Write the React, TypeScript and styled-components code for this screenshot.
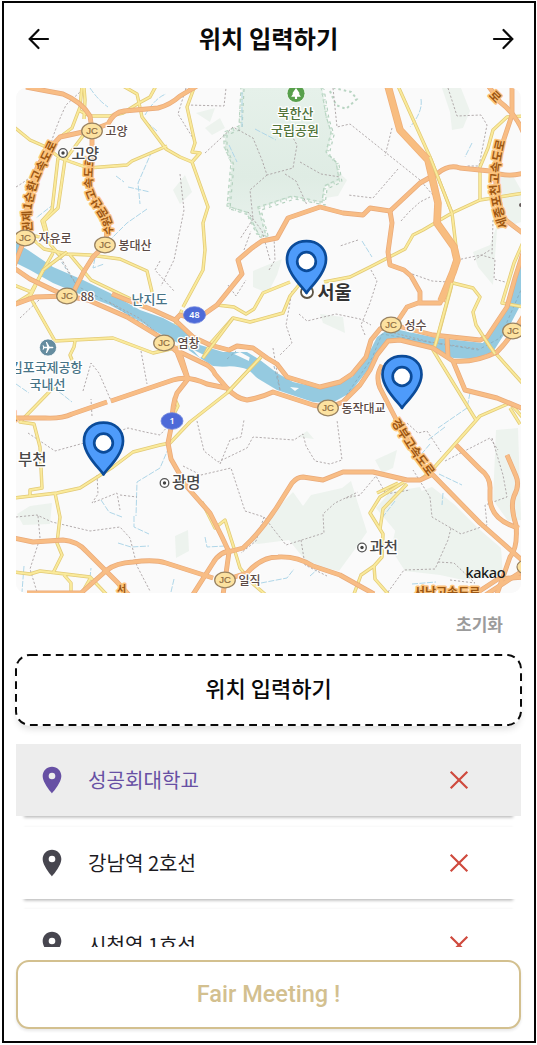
import React from 'react';
import styled, { createGlobalStyle } from 'styled-components';
import { MdLocationOn, MdPark, MdAirplanemodeActive } from 'react-icons/md';

const GlobalStyle = createGlobalStyle`
  *, *::before, *::after { box-sizing: border-box; }
  body { margin: 0; background: #fff; font-family: Roboto, "Noto Sans CJK KR", sans-serif; }
  button { font: inherit; padding: 0; border: 0; background: none; color: inherit; }
`;

const Page = styled.div`
  width: 537px;
  height: 1045px;
  padding: 1px 1px 2px 2px;
  background: #fff;
`;

const Screen = styled.main`
  display: flex;
  flex-direction: column;
  width: 100%;
  height: 100%;
  padding: 0 13px 13px 12px;
  border: 2px solid #050505;
  overflow: hidden;
`;

const Header = styled.header`
  display: flex;
  align-items: center;
  justify-content: space-between;
  flex: none;
  height: 72px;
  margin-bottom: 13px;
  padding: 0 7px 0 12px;
`;

const Title = styled.h1`
  margin: 0 5px 2px 0;
  font: 700 24.3px/36px "Noto Sans CJK KR", sans-serif;
  color: #0a0a0a;
`;

const IconButton = styled.button<{ $size: number }>`
  display: flex;
  align-items: center;
  justify-content: center;
  flex: none;
  width: ${(p) => p.$size}px;
  height: ${(p) => p.$size}px;
`;

const MapCard = styled.section`
  flex: none;
  width: 505px;
  height: 505px;
  border-radius: 10px;
  overflow: hidden;
  background: #fafafa;
  svg { display: block; }
`;

const ResetRow = styled.div`
  display: flex;
  justify-content: flex-end;
  align-items: center;
  flex: none;
  height: 61px;
  padding-right: 18px;
`;

const ResetButton = styled.button`
  font: 700 17px/24px "Noto Sans CJK KR", sans-serif;
  color: #9b9b9b;
`;

const AddButton = styled.button`
  position: relative;
  display: flex;
  align-items: center;
  justify-content: center;
  flex: none;
  width: 507px;
  height: 72px;
  margin-left: -1px;
  padding-bottom: 6px;
  border-radius: 15px;
  background: #fff;
  box-shadow: 0 5px 7px -2px rgba(0, 0, 0, 0.13);
  font: 500 22px/32px "Noto Sans CJK KR", sans-serif;
  color: #0a0a0a;
`;

const DashedOutline = styled.svg`
  position: absolute;
  inset: 0;
`;

const PlaceList = styled.ul`
  display: flex;
  flex-direction: column;
  gap: 10.5px;
  flex: none;
  height: 203px;
  margin: 18px 0 0;
  padding: 0;
  list-style: none;
  overflow: hidden;
`;

const PlaceRow = styled.li<{ $active?: boolean }>`
  display: flex;
  align-items: center;
  flex: none;
  height: 72px;
  padding: 0 52px 0 20px;
  background: ${(p) => (p.$active ? '#ededed' : '#fff')};
  color: ${(p) => (p.$active ? '#6750a4' : '#1c1b1f')};
  box-shadow: 0 9.5px 3px -8px rgba(0, 0, 0, 0.28), 0 -9px 2px -8px rgba(0, 0, 0, 0.03);
  > svg { flex: none; color: ${(p) => (p.$active ? '#6750a4' : '#47464f')}; }
`;

const PlaceName = styled.span`
  flex: 1;
  margin-left: 20px;
  font: 400 20.1px/30px "Noto Sans CJK KR", sans-serif;
`;

const MeetingButton = styled.button`
  flex: none;
  height: 69px;
  margin-top: 13px;
  padding-bottom: 2px;
  border: 2.5px solid #d3c08f;
  border-radius: 13px;
  background: #fff;
  box-shadow: 0 2px 3px rgba(0, 0, 0, 0.09);
  font: 500 23.5px/28px Roboto, sans-serif;
  color: #d3c08f;
`;

const MapText = styled.text<{ $size?: number; $color?: string; $weight?: number }>`
  font-family: "Noto Sans CJK KR", sans-serif;
  font-size: ${(p) => p.$size ?? 12}px;
  font-weight: ${(p) => p.$weight ?? 500};
  fill: ${(p) => p.$color ?? '#5b4a45'};
  stroke: #fff;
  stroke-width: 2.5px;
  stroke-linejoin: round;
  paint-order: stroke;
`;

const RoadText = styled.text<{ $size?: number }>`
  font-family: "Noto Sans CJK KR", sans-serif;
  font-size: ${(p) => p.$size ?? 12}px;
  font-weight: 700;
  fill: #9c5713;
  stroke: #fdc47c;
  stroke-width: 3px;
  stroke-linejoin: round;
  paint-order: stroke;
`;

const highways = [
  'M26 87 L63 94 Q82 102 90 116 L92 130 L92 160 Q86 180 91 192 L106 218 Q108 232 105 245 L93 257 L83 273 L73 293',
  'M92 130 L60 137 L48 150 L38 165 Q29 190 26 215 L25 238 L14 266',
  'M92 130 L108 124 Q114 112 124 111 L158 108 Q170 105 180 96 L197 86',
  'M14 268 L30 279 L53 290 L67 296',
  'M10 306 L35 297 L67 296 L88 300 L127 317 L160 337 L180 352 L207 365 Q213 369 215 374 L227 388 Q237 399 247 400 Q260 398 273 392 L313 405 L328 408 L343 402 L360 385 L370 370 L377 355 L388 341 L400 340 L433 348 L453 361 Q475 363 497 352 Q510 339 524 315',
  'M112 294 L127 300 L153 310 L175 320 L193 337 L210 345 L229 350 L237 346 L253 348 L267 358 L277 364 L287 377 L320 387 L340 382 L352 374 L366 357 L371 340 L380 329 L390 324 L433 335 L480 340 L487 337 L507 307 L515 278 L524 250',
  'M175 320 L180 315 L187 317 L200 317 L217 305 L242 274 L238 260 L252 248 L262 241 L277 238 L288 218 L320 207 L343 213 L363 215 L370 208 L390 211 L420 183 L438 173 Q449 164 460 168 L490 171 Q507 178 524 173',
  'M388 86 L400 130 L428 160 L438 203 L437 223 L454 247 L457 260 L453 272 L440 303 L418 303 L407 307 L397 322',
  'M390 211 L392 223 L388 252 L390 265 L404 270 L411 276 L420 292 L420 303',
  'M447 337 L448 357',
  'M453 361 L465 390 L497 398 L524 409',
  'M382 365 Q375 376 380 388 L400 427 L420 463 L433 475 L480 523 L524 562',
  'M512 86 L512 115 L502 145 Q494 165 496 185 L503 218 L524 234',
  'M487 84 L500 102 Q516 114 524 134',
  'M14 418 L45 418 Q61 419 72 414 L107 402',
  'M111 401 L173 380 Q188 375 207 384 L226 388',
  'M180 353 L188 379 L177 393 Q172 405 172 423 L168 443 L171 459 L187 487 L210 513 L222 537 L229 552 L223 595',
  'M160 337 L177 352 L188 380',
  'M14 538 L33 542 L63 540 Q77 541 86 551 L117 582 L129 595',
  'M27 593 L81 593 L107 570 Q116 563 133 562 Q154 559 166 563 L213 578',
  'M192 596 L213 563 Q220 551 232 551 L243 548 Q260 533 277 507 L292 483 Q297 477 303 477 L323 480 L343 472 L373 472 L407 480 L420 480 L433 474',
  'M225 580 L247 573 Q261 557 278 557 Q297 556 313 566 L340 575 L374 594',
  'M456 445 L480 469 Q491 477 490 490 L490 500 Q492 521 519 528',
  'M507 455 L516 476 Q520 485 514 496 Q510 506 516 525 Q518 548 510 557 L497 594',
  'M524 570 L484 596',
  'M524 577 L498 579 L478 592',
];

const wideHighway = 'M388 86 L400 130 L428 160 L438 203 L437 223 L454 247 L457 260 L453 272 L441 301';

const yellowRoads = [
  'M14 127 L30 140 L46 147 L60 158 L88 168 L127 165 L132 161 L167 146',
  'M82 86 L80 107 L72 128 L60 137 M78 110 L90 116 L110 116 L123 113 L139 103 L150 97 L156 86',
  'M123 86 L137 94 L139 103 L142 117 L166 149 L180 157 L192 162 L200 153 L192 152 L195 143 L187 107 L194 88',
  'M84 88 L85 100 L84 119',
  'M192 162 L208 207 L203 223 L205 250 L203 270 L183 307',
  'M85 133 L65 160 L58 208 L44 221 L50 244 L62 258',
  'M58 158 L52 210 L42 221 L47 238 L28 235 L44 249 L67 254 L90 255 L120 259 L147 271 L152 292',
  'M67 252 L43 270 L30 297 L55 341 L113 338 L153 353 L175 348 L190 345',
  'M14 285 L31 292 L53 253 M16 303 L32 293',
  'M70 255 L91 280 L133 300',
  'M75 341 L74 347 L70 355 L72 360',
  'M56 385 L20 422 L34 424 L40 447 L42 488 L30 490 L30 497',
  'M14 498 L57 493 L80 488 L113 467 L133 452 L160 445 L170 443 L190 422 L227 393 L261 357',
  'M55 493 L60 517 L57 543 L62 555 L53 573',
  'M14 572 L30 574 L40 571 L90 577 L108 596 M64 575 L71 583 L71 594 M91 577 L83 591',
  'M203 358 L210 344 L233 318 L250 322 L283 313 L290 296 L299 285',
  'M217 305 L234 307 L246 314 L254 309 L263 293 L290 282 M324 282 L350 277 L370 267 L405 249 L413 235 L423 230 L452 213 L480 200 L524 193',
  'M398 86 L430 157 L452 213 L457 255 L451 288 L437 340 L433 350 L476 420',
  'M524 116 L507 117 L493 130 L488 148 L480 167 L480 200',
  'M453 283 L473 288 L480 297 L473 312 L476 325 L490 347 L524 385',
  'M524 240 L514 263 L502 303 L524 307',
  'M420 480 L432 470 L480 416 L510 403 L524 419',
  'M377 493 L398 483 M404 482 L380 497 L370 513 L383 534 L382 557 L374 566 L361 575 L354 594 M407 484 L383 509 L380 529 M374 566 L375 579 L389 595',
  'M202 502 L215 528 L225 520 L233 545 L240 568 L252 583 L266 595',
  'M174 397 L178 406 L174 414 M182 310 L175 324',
  'M510 408 L520 424',
];

const bridges = 'M203 358 L233 318 M227 393 L261 357 M435 346 L452 283 M483 336 L495 354 M67 252 L43 270 M430 157 L452 213';

const trails = [
  'M16 187 Q38 174 48 157 Q51 137 66 105 L80 92', 'M187 105 L224 106 L226 88',
  'M205 153 L233 127 L253 138 L262 160 L267 175 L293 168 L297 145 L292 136',
  'M267 175 L250 190 L253 219 L240 239 M285 174 L296 181 L307 205', 'M300 162 L321 174 L340 177',
  'M333 88 L337 127 L350 124 L420 180 L438 201', 'M398 169 L373 198 L348 195',
  'M448 88 L457 116 L481 115 L487 125 L479 166 L467 166', 'M392 128 L385 156',
  'M401 221 L409 212 L420 202 L430 197', 'M186 88 L178 114 L196 143 M180 174 L184 210 L174 260 L161 286',
  'M160 261 L155 270 L174 291', 'M57 251 L77 286 M109 302 L139 318 L157 333',
  'M20 318 L39 300 M83 391 L91 363 L99 373 L112 403', 'M92 416 L91 399 M141 351 L147 384',
  'M28 433 L55 451 L95 440 L128 428 L145 432 L160 435 L170 424',
  'M97 475 L98 494 L92 503 L117 493 L120 510 M120 495 L137 497',
  'M16 517 L37 515 L52 522 L90 531 L120 527 L130 538 L137 566 L150 591',
  'M38 516 L40 538 L30 569 L37 592', 'M197 421 L204 451 L218 462 L247 448 L253 437 L294 440 L303 434 L306 446 L315 461 L330 464 L342 460 L337 420',
  'M220 464 L230 440 L241 437 L244 420', 'M183 466 L201 475 L231 468 L245 511 L264 517 L286 545 L324 533 L323 514 L335 503 L358 492',
  'M301 540 L305 565 L327 576 M264 517 L256 541 L241 553',
  'M228 285 L236 296 L246 280 M269 270 L275 260 L274 237',
  'M292 291 L286 325 L292 343 L280 355', 'M299 314 L307 321 L336 314 L360 319 L371 325',
  'M371 270 L377 281 L370 303 L361 325 L365 335', 'M401 270 L432 281 L448 282',
  'M457 260 L481 255 L495 259 L494 279 L505 282', 'M407 423 L418 433 L427 431 L441 452 M445 461 L490 438 L498 450',
  'M492 438 L503 475 L507 497 L485 505 L487 525 L461 534 L432 517 L430 497 L413 470',
  'M388 592 L404 570 L435 569 L448 540 L451 528', 'M346 498 L360 495 L376 476 L386 494 L410 490',
  'M244 250 L251 231 M358 240 L340 246 M493 220 L492 255 M474 260 L490 250',
  'M273 348 L280 390 M382 330 L430 342 L478 349', 'M270 260 L262 231 L248 212',
  'M450 580 L475 583 L454 563 L438 562',
];

const streams = [
  'M90 88 Q98 100 108 107', 'M145 115 Q155 98 166 94 M157 131 L143 119',
  'M152 151 L138 183 L140 204 M116 176 L124 182 M128 187 L150 192',
  'M147 209 L127 223 L107 243 M54 204 L36 218', 'M95 258 L93 268 L104 264',
  'M242 92 L242 127 M229 145 L237 162 M255 129 L276 140', 'M421 99 Q423 112 410 127',
  'M472 143 L465 157 M362 241 L372 257', 'M169 447 L160 468 L137 482 L136 516',
  'M101 500 L109 512 L122 517 M134 516 L134 527 L149 534 M118 543 L131 547 L149 546',
  'M205 537 L207 547 L225 546 M261 583 L287 578 L294 569 M310 576 L319 568',
  'M470 393 L467 408 L438 428 M445 427 L428 440 M430 444 L419 457',
  'M395 501 L382 518 M439 474 L462 485 M443 493 L442 505', 'M16 384 L29 393 M53 387 L72 402',
  'M24 566 L22 592 M90 578 L91 568 M174 579 L171 592 M412 584 L436 582',
];

const jcLabels = [
  { x: 92, y: 131, name: '고양' }, { x: 25, y: 238, name: '자유로' }, { x: 105, y: 245, name: '봉대산' },
  { x: 67, y: 296, name: '88' }, { x: 164, y: 343, name: '염창' }, { x: 391, y: 325, name: '성수' },
  { x: 328, y: 408, name: '동작대교' }, { x: 225, y: 580, name: '일직' }, { x: 513, y: 331, name: '' },
];

const mapPins = [{ x: 306.5, y: 240 }, { x: 402, y: 355 }, { x: 103.5, y: 421.5 }];
const cityDots = [{ x: 63, y: 153 }, { x: 164.5, y: 483 }, { x: 362, y: 547.5 }];

function MapPin({ x, y }: { x: number; y: number }) {
  return (
    <g transform={`translate(${x} ${y})`}>
      <path d="M0 53 C-4 47 -19.5 33 -19.5 19.5 C-19.5 8 -11 1.2 0 1.2 C11 1.2 19.5 8 19.5 19.5 C19.5 33 4 47 0 53Z" fill="#4e9bfa" stroke="#0b4b99" strokeWidth="2.7" strokeLinejoin="round" />
      <circle cy="21.5" r="9.3" fill="#fff" stroke="#0b4b99" strokeWidth="2.7" />
    </g>
  );
}

function JunctionBadge({ x, y, name }: { x: number; y: number; name: string }) {
  return (
    <g>
      <ellipse cx={x} cy={y} rx="10.3" ry="7.8" fill="#fce2a0" stroke="#9a8361" strokeWidth="1.3" />
      <text x={x} y={y + 3.3} textAnchor="middle" fontFamily="Liberation Sans, sans-serif" fontSize="9.5" fill="#8d6c42" stroke="#8d6c42" strokeWidth=".2">JC</text>
      {name && <MapText x={x + 13.5} y={y + 4.5}>{name}</MapText>}
    </g>
  );
}

function RouteBadge({ x, y, n }: { x: number; y: number; n: string }) {
  return (
    <g>
      <ellipse cx={x} cy={y} rx="11" ry="8.3" fill="#4d6ad8" stroke="#6c83dd" strokeWidth=".8" />
      <text x={x} y={y + 3.3} textAnchor="middle" fontFamily="Noto Sans, sans-serif" fontWeight="600" fontSize="9" fill="#fff">{n}</text>
    </g>
  );
}

function CityMap() {
  const park = 'M242 87 L240 127 L225 133 L225 147 L232 163 L228 207 L247 213 L258 235 L267 237 L259 208 L293 197 L323 203 L325 187 L340 180 L337 163 L327 153 L332 133 L327 117 L322 87';
  return (
    <svg width="505" height="505" viewBox="16 88 505 505">
      <defs>
        <linearGradient id="parkShade" x1="0" y1="0" x2="0" y2="1">
          <stop offset="0" stopColor="#e6f1ea" /><stop offset=".6" stopColor="#dfece4" /><stop offset="1" stopColor="#e9f2ed" />
        </linearGradient>
        <path id="ringRoad" d="M32 232 L31 212 Q35 185 44 170 L62 134" />
        <path id="munsanRoad" d="M112 235 Q114 225 108 214 L96 195 Q90 184 95 152" />
        <path id="sejongRoad" d="M508 227 Q498 198 499 180 Q500 160 507 134" />
        <path id="gyeongbuRoad" d="M391 422 L411 453 L428 476" />
      </defs>
      <rect x="16" y="88" width="505" height="505" fill="#fafafa" />
      <g fill="#edf3ee">
        <path d="M442 88 L461 88 L470 111 L463 128 L452 130 L450 112Z" />
        <path d="M496 170 L512 174 L521 190 L521 222 L497 230 L493 285 L478 267 L473 252 L490 245 L498 222Z" />
        <path d="M333 167 L347 180 L338 196 L325 198Z M253 271 L282 259 L277 275 L268 293 L253 287Z M320 314 L343 317 L345 333 L323 323Z" />
        <path d="M185 175 L173 190 L180 204 L192 192Z M205 128 L220 118 L225 128 L212 135Z M196 113 L215 108 L210 122Z" />
        <path d="M351 481 L342 488 L311 495 L303 506 L293 492 L270 515 L246 542 L258 544 L289 540 L309 565 L339 571 L358 545 L367 532 L360 510Z" />
        <path d="M411 495 L432 487 L455 505 L480 530 L501 548 L503 575 L463 580 L440 575 L405 571 L391 549 L400 510Z" />
        <path d="M496 430 L518 428 L521 520 L508 521 L493 500Z M375 460 L397 450 L393 468 L382 473Z" />
        <path d="M30 506 L52 503 L50 524 L23 525 L17 514Z M175 536 L188 530 L189 551 L176 558Z M298 437 L307 431 L314 439Z" />
        <path d="M350 497 L360 510 L358 540 L350 542Z M376 508 L390 492 L420 487 L430 510 L417 532 L397 533Z" />
      </g>
      <path d={park} fill="url(#parkShade)" />
      <path d={park} fill="none" stroke="#b9d5c3" strokeWidth="1.2" strokeDasharray="3.5 3" transform="translate(-1 -1)" />
      <path d={park} fill="none" stroke="#b3d0be" strokeWidth="1.2" strokeDasharray="3 4" transform="translate(2 2)" />
      <path d={park} fill="none" stroke="#c3dccb" strokeWidth="3" strokeDasharray="1.3 4.5" />
      <path d="M330 91 L336 105 L346 109 L357 99 L351 92 L334 88" fill="none" stroke="#b9d5c3" strokeWidth="2" strokeDasharray="2.5 3" />
      <path d="M16 243 L28 250 L53 267 L83 280 L110 293 L140 310 L163 318 L180 327 L200 345 L223 352 L247 352 L260 360 L277 373 L293 382 L320 388 L343 380 L352 377 L367 357 L377 337 L390 328 L437 338 L483 343 L507 307 L522 258 L522 302 L510 325 L493 352 L473 359 L453 358 L437 350 L400 340 L387 342 L370 367 L350 393 L332 403 L313 402 L277 390 L257 378 L240 368 L213 366 L200 358 L180 344 L153 330 L143 323 L110 305 L77 293 L53 283 L30 270 L16 263Z" fill="#95cae0" />
      <path d="M234 354 L240 352 L251 358 L249 361Z M290 387 L299 388 L295 391Z M192 349 L204 355 L200 358Z M215 369 Q230 363 249 370 L268 389 Q246 394 215 369Z" fill="#fafafa" />
      <path d="M247 369 L276 388 L280 377 L262 362 L250 356Z" fill="#95cae0" />
      <path d="M56 253 L77 286 L110 303 L157 333 M227 359 L236 351 M274 366 L280 390 M343 400 L372 358 L382 334 L440 344 L478 350 L500 338 L521 290" fill="none" stroke="#86a9ba" strokeWidth=".8" strokeDasharray="3 2.4" />
      <g fill="none" stroke="#afd6e8" strokeWidth="1" strokeDasharray="6 1.5">{streams.map((d) => <path key={d} d={d} />)}</g>
      <g fill="none" stroke="#aaa3a4" strokeWidth=".9" strokeDasharray="2.2 1.8">{trails.map((d) => <path key={d} d={d} />)}</g>
      <g fill="none" strokeLinejoin="round">
        {yellowRoads.map((d) => <path key={d} d={d} stroke="#e2ca77" strokeWidth="3.4" />)}
        {yellowRoads.map((d) => <path key={d} d={d} stroke="#faea9b" strokeWidth="1.9" />)}
        {highways.map((d) => <path key={d} d={d} stroke="#e9aa7a" strokeWidth="4.9" />)}
        {highways.map((d) => <path key={d} d={d} stroke="#f8bd85" strokeWidth="3.5" />)}
        <path d={wideHighway} stroke="#efb079" strokeWidth="7.6" />
        <path d={wideHighway} stroke="#f8bd80" strokeWidth="6" />
        <path d={bridges} stroke="#e2ca77" strokeWidth="3.4" />
        <path d={bridges} stroke="#faea9b" strokeWidth="1.9" />
      </g>
      <RoadText $size={11.8}><textPath href="#ringRoad">권제1순환고속도로</textPath></RoadText>
      <RoadText $size={11.3}><textPath href="#munsanRoad">수원문산고속도로</textPath></RoadText>
      <RoadText><textPath href="#sejongRoad">세종포천고속도로</textPath></RoadText>
      <RoadText><textPath href="#gyeongbuRoad">경부고속도로</textPath></RoadText>
      <RoadText x="414" y="597">서남고속도로</RoadText>
      <RoadText transform="translate(491 93) rotate(45)" x="0" y="4">로</RoadText>
      <RoadText x="6" y="421">로</RoadText>
      <RoadText x="117" y="593" $size={10}>서</RoadText>
      {jcLabels.map((label) => <JunctionBadge key={`${label.x}-${label.y}`} {...label} />)}
      <ellipse cx="526" cy="567" rx="9" ry="7" fill="#fce2a0" stroke="#9a8361" strokeWidth="1.2" />
      <circle cx="521" cy="205" r="2" fill="#655c5c" />
      <RouteBadge x={194.5} y={315} n="48" />
      <RouteBadge x={172} y={421} n="1" />
      {cityDots.map((c) => (
        <g key={c.x}>
          <circle cx={c.x} cy={c.y} r="4.3" fill="#fff" stroke="#555" strokeWidth="1.3" />
          <circle cx={c.x} cy={c.y} r="1.7" fill="#444" />
        </g>
      ))}
      <circle cx="307" cy="292" r="6" fill="#fff" stroke="#5e5545" strokeWidth="1.8" />
      <MapText x="71.5" y="158.5" $size={15} $color="#484848">고양</MapText>
      <MapText x="317.5" y="298.5" $size={18.5} $weight={700} $color="#333">서울</MapText>
      <MapText x="18" y="465" $size={15.5} $color="#484848">부천</MapText>
      <MapText x="172" y="488" $size={15.5} $color="#484848">광명</MapText>
      <MapText x="369.5" y="553" $size={15.5} $color="#484848">과천</MapText>
      <MapText x="131.5" y="303.5" $size={13} $color="#477386">난지도</MapText>
      <MapText x="82.5" y="372" textAnchor="end" $size={13} $color="#477386">김포국제공항</MapText>
      <MapText x="47.5" y="389" textAnchor="middle" $size={13} $color="#477386">국내선</MapText>
      <MapText x="295.5" y="117.5" textAnchor="middle" $size={13} $color="#52743a">북한산</MapText>
      <MapText x="295" y="134.5" textAnchor="middle" $size={13} $color="#52743a">국립공원</MapText>
      <circle cx="296" cy="93.5" r="9" fill="#58a04c" stroke="#fff" strokeWidth=".8" />
      <MdPark x="289.5" y="87" size="13" color="#fff" />
      <circle cx="48" cy="347.5" r="8.6" fill="#658c9f" stroke="#fff" strokeWidth=".8" />
      <g transform="rotate(90 48 347.5)"><MdAirplanemodeActive x="41.5" y="341" size="13" color="#fff" /></g>
      {mapPins.map((p) => <MapPin key={p.x} {...p} />)}
      <text x="465.5" y="577.5" fontFamily="Noto Sans, sans-serif" fontSize="14.5" fontWeight="500" fill="#191919" textLength="40">kakao</text>
    </svg>
  );
}

function Arrow({ forward = false }: { forward?: boolean }) {
  return (
    <svg width="22" height="22" viewBox="0 0 22 22" fill="none" stroke="#0a0a0a" strokeWidth="2.2" strokeLinecap="round" strokeLinejoin="miter">
      <path d={forward ? 'M2 11H20M11.5 2L20.3 11L11.5 20' : 'M20 11H2M10.5 2L1.7 11L10.5 20'} />
    </svg>
  );
}

function Cross() {
  return (
    <svg width="20" height="20" viewBox="0 0 20 20" fill="none" stroke="#cf4a3e" strokeWidth="2.2">
      <path d="M1.7 1.7L18.3 18.3M18.3 1.7L1.7 18.3" />
    </svg>
  );
}

const places = ['성공회대학교', '강남역 2호선', '시청역 1호선'];

export default function App() {
  return (
    <Page>
      <GlobalStyle />
      <Screen>
        <Header>
          <IconButton $size={22} aria-label="뒤로"><Arrow /></IconButton>
          <Title>위치 입력하기</Title>
          <IconButton $size={22} aria-label="다음"><Arrow forward /></IconButton>
        </Header>
        <MapCard><CityMap /></MapCard>
        <ResetRow><ResetButton>초기화</ResetButton></ResetRow>
        <AddButton>
          <DashedOutline width="507" height="72" fill="none">
            <rect x="1" y="1" width="505" height="70" rx="14" stroke="#0a0a0a" strokeWidth="2" strokeDasharray="7.8 5.1" />
          </DashedOutline>
          위치 입력하기
        </AddButton>
        <PlaceList>
          {places.map((name, i) => (
            <PlaceRow key={name} $active={i === 0}>
              <MdLocationOn size={32} />
              <PlaceName>{name}</PlaceName>
              <IconButton $size={20} aria-label="삭제"><Cross /></IconButton>
            </PlaceRow>
          ))}
        </PlaceList>
        <MeetingButton>Fair Meeting !</MeetingButton>
      </Screen>
    </Page>
  );
}
